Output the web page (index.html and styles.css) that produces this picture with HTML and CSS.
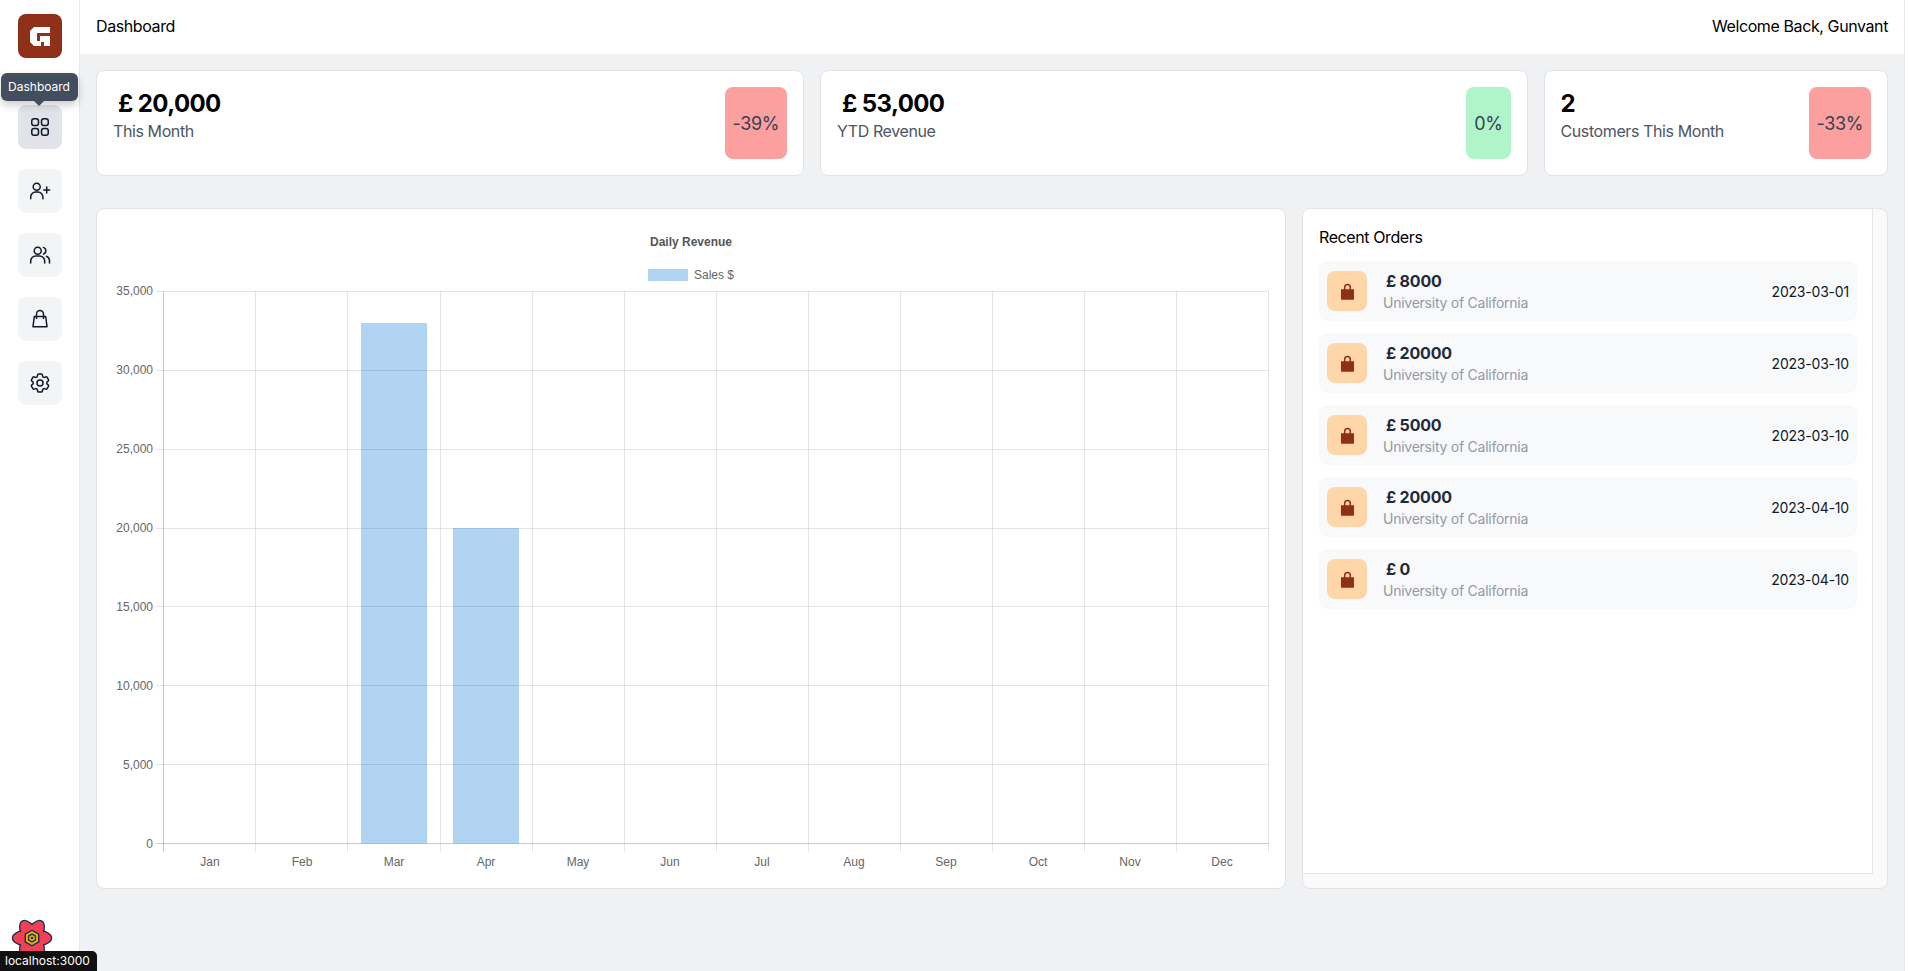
FILE: index.html
```html
<!DOCTYPE html>
<html lang="en">
<head>
    <meta charset="UTF-8">
    <title>Dashboard</title>
    <link rel="stylesheet" href="styles.css">
</head>
<body>
<div class="app">
    <aside class="sidebar">
        <div class="logo">
            <svg width="44" height="44" viewBox="0 0 44 44"><path d="M16 13H32V19H19V27H22V22H32V32H26V28H23V32H16L12 28V17Z" fill="#fff"/></svg>
        </div>
        <div class="tile active">
            <svg class="ico" viewBox="0 0 24 24"><path d="M3.75 6A2.25 2.25 0 016 3.75h2.25A2.25 2.25 0 0110.5 6v2.25a2.25 2.25 0 01-2.25 2.25H6a2.25 2.25 0 01-2.25-2.25V6zM3.75 15.75A2.25 2.25 0 016 13.5h2.25a2.25 2.25 0 012.25 2.25V18a2.25 2.25 0 01-2.25 2.25H6A2.25 2.25 0 013.75 18v-2.25zM13.5 6a2.25 2.25 0 012.25-2.25H18A2.25 2.25 0 0120.25 6v2.25A2.25 2.25 0 0118 10.5h-2.25a2.25 2.25 0 01-2.25-2.25V6zM13.5 15.75a2.25 2.25 0 012.25-2.25H18a2.25 2.25 0 012.25 2.25V18A2.25 2.25 0 0118 20.25h-2.25A2.25 2.25 0 0113.5 18v-2.25z"/></svg>
            <div class="tooltip">Dashboard</div>
        </div>
        <div class="tile">
            <svg class="ico" viewBox="0 0 24 24"><circle cx="8.7" cy="7.7" r="3.5"/><path d="M2.700 19.700v-1.700a5 5 0 0 1 5-5h2.200a5 5 0 0 1 5 5v1.700M18.700 8v6M15.700 11h6"/></svg>
        </div>
        <div class="tile">
            <svg class="ico" viewBox="0 0 24 24"><circle cx="9.7" cy="7.7" r="3.5"/><path d="M2.700 20v-2a5 5 0 0 1 5-5h4a5 5 0 0 1 5 5v2M15.500 4.400a3.500 3.500 0 0 1 0 6.600M18.500 13.300a5 5 0 0 1 3 4.700v2"/></svg>
        </div>
        <div class="tile">
            <svg class="ico" viewBox="0 0 24 24"><path d="M8.500 11.500V7a3.500 3.500 0 0 1 7 0v4.500M6.300 9.500h11.400l1.300 10.200H5z"/></svg>
        </div>
        <div class="tile">
            <svg class="ico" viewBox="0 0 24 24"><path d="M9.594 3.94c.09-.542.56-.94 1.11-.94h2.593c.55 0 1.02.398 1.11.94l.213 1.281c.063.374.313.686.645.87.074.04.147.083.22.127.324.196.72.257 1.075.124l1.217-.456a1.125 1.125 0 011.37.49l1.296 2.247a1.125 1.125 0 01-.26 1.431l-1.003.827c-.293.24-.438.613-.431.992a6.759 6.759 0 010 .255c-.007.378.138.75.43.99l1.005.828c.424.35.534.954.26 1.43l-1.298 2.247a1.125 1.125 0 01-1.369.491l-1.217-.456c-.355-.133-.75-.072-1.076.124a6.57 6.57 0 01-.22.128c-.331.183-.581.495-.644.869l-.213 1.28c-.09.543-.56.941-1.11.941h-2.594c-.55 0-1.02-.398-1.11-.94l-.213-1.281c-.062-.374-.312-.686-.644-.87a6.52 6.52 0 01-.22-.127c-.325-.196-.72-.257-1.076-.124l-1.217.456a1.125 1.125 0 01-1.369-.49l-1.297-2.247a1.125 1.125 0 01.26-1.431l1.004-.827c.292-.24.437-.613.43-.992a6.932 6.932 0 010-.255c.007-.378-.138-.75-.43-.99l-1.004-.828a1.125 1.125 0 01-.26-1.43l1.297-2.247a1.125 1.125 0 011.37-.491l1.216.456c.356.133.751.072 1.076-.124.072-.044.146-.087.22-.128.332-.183.582-.495.644-.869l.214-1.281z"/><path d="M15 12a3 3 0 11-6 0 3 3 0 016 0z"/></svg>
        </div>
    </aside>

    <div class="main">
        <header class="topbar">
            <span>Dashboard</span>
            <span>Welcome Back, Gunvant</span>
        </header>

        <div class="content">
            <div class="stats">
                <div class="card stat">
                    <div>
                        <div class="stat-value"><span class="pound">£</span> 20,000</div>
                        <div class="stat-label">This Month</div>
                    </div>
                    <div class="badge red">-39%</div>
                </div>
                <div class="card stat">
                    <div>
                        <div class="stat-value"><span class="pound">£</span> 53,000</div>
                        <div class="stat-label">YTD Revenue</div>
                    </div>
                    <div class="badge green">0%</div>
                </div>
                <div class="card stat">
                    <div>
                        <div class="stat-value">2</div>
                        <div class="stat-label">Customers This Month</div>
                    </div>
                    <div class="badge red">-33%</div>
                </div>
            </div>

            <div class="lower">
                <div class="card chart-card">
                    <svg class="chart" viewBox="97 209 1188 679">
                        <text class="chart-title" x="691" y="246" text-anchor="middle">Daily Revenue</text>
                        <rect class="bar" x="648" y="269" width="40" height="12"/>
                        <text class="tick" x="694" y="279">Sales $</text>

                        <rect class="bar" x="361" y="323" width="66" height="520.5"/>
                        <rect class="bar" x="453" y="528" width="66" height="315.5"/>

                        <path class="grid" d="M156 291.5H1269M156 370.5H1269M156 449.5H1269M156 528.5H1269M156 606.5H1269M156 685.5H1269M156 764.5H1269"/>
                        <path class="grid" d="M255.5 291V852M347.5 291V852M440.5 291V852M532.5 291V852M624.5 291V852M716.5 291V852M808.5 291V852M900.5 291V852M992.5 291V852M1084.5 291V852M1176.5 291V852M1268.5 291V852"/>
                        <path class="axis" d="M163.5 291V852M156 843.5H1269"/>

                        <text class="tick" x="153" y="295" text-anchor="end">35,000</text>
                        <text class="tick" x="153" y="374" text-anchor="end">30,000</text>
                        <text class="tick" x="153" y="453" text-anchor="end">25,000</text>
                        <text class="tick" x="153" y="532" text-anchor="end">20,000</text>
                        <text class="tick" x="153" y="611" text-anchor="end">15,000</text>
                        <text class="tick" x="153" y="690" text-anchor="end">10,000</text>
                        <text class="tick" x="153" y="769" text-anchor="end">5,000</text>
                        <text class="tick" x="153" y="848" text-anchor="end">0</text>

                        <text class="tick" x="210" y="866" text-anchor="middle">Jan</text>
                        <text class="tick" x="302" y="866" text-anchor="middle">Feb</text>
                        <text class="tick" x="394" y="866" text-anchor="middle">Mar</text>
                        <text class="tick" x="486" y="866" text-anchor="middle">Apr</text>
                        <text class="tick" x="578" y="866" text-anchor="middle">May</text>
                        <text class="tick" x="670" y="866" text-anchor="middle">Jun</text>
                        <text class="tick" x="762" y="866" text-anchor="middle">Jul</text>
                        <text class="tick" x="854" y="866" text-anchor="middle">Aug</text>
                        <text class="tick" x="946" y="866" text-anchor="middle">Sep</text>
                        <text class="tick" x="1038" y="866" text-anchor="middle">Oct</text>
                        <text class="tick" x="1130" y="866" text-anchor="middle">Nov</text>
                        <text class="tick" x="1222" y="866" text-anchor="middle">Dec</text>
                    </svg>
                </div>

                <div class="card orders-card">
                    <div class="orders">
                        <h2 class="orders-title">Recent Orders</h2>
                        <div class="order">
                            <div class="order-icon"><svg class="bag" viewBox="0 0 16 16"><path d="M5 6V4.500a3 3 0 0 1 6 0V6h2.500v8a1 1 0 0 1-1 1h-9a1 1 0 0 1-1-1V6zM6.300 6h3.400V4.500a1.700 1.700 0 0 0-3.400 0z"/></svg></div>
                            <div class="order-info">
                                <div class="order-amount"><span class="pound-sm">£</span> 8000</div>
                                <div class="order-name">University of California</div>
                            </div>
                            <div class="order-date">2023-03-01</div>
                        </div>
                        <div class="order">
                            <div class="order-icon"><svg class="bag" viewBox="0 0 16 16"><path d="M5 6V4.500a3 3 0 0 1 6 0V6h2.500v8a1 1 0 0 1-1 1h-9a1 1 0 0 1-1-1V6zM6.300 6h3.400V4.500a1.700 1.700 0 0 0-3.400 0z"/></svg></div>
                            <div class="order-info">
                                <div class="order-amount"><span class="pound-sm">£</span> 20000</div>
                                <div class="order-name">University of California</div>
                            </div>
                            <div class="order-date">2023-03-10</div>
                        </div>
                        <div class="order">
                            <div class="order-icon"><svg class="bag" viewBox="0 0 16 16"><path d="M5 6V4.500a3 3 0 0 1 6 0V6h2.500v8a1 1 0 0 1-1 1h-9a1 1 0 0 1-1-1V6zM6.300 6h3.400V4.500a1.700 1.700 0 0 0-3.400 0z"/></svg></div>
                            <div class="order-info">
                                <div class="order-amount"><span class="pound-sm">£</span> 5000</div>
                                <div class="order-name">University of California</div>
                            </div>
                            <div class="order-date">2023-03-10</div>
                        </div>
                        <div class="order">
                            <div class="order-icon"><svg class="bag" viewBox="0 0 16 16"><path d="M5 6V4.500a3 3 0 0 1 6 0V6h2.500v8a1 1 0 0 1-1 1h-9a1 1 0 0 1-1-1V6zM6.300 6h3.400V4.500a1.700 1.700 0 0 0-3.400 0z"/></svg></div>
                            <div class="order-info">
                                <div class="order-amount"><span class="pound-sm">£</span> 20000</div>
                                <div class="order-name">University of California</div>
                            </div>
                            <div class="order-date">2023-04-10</div>
                        </div>
                        <div class="order">
                            <div class="order-icon"><svg class="bag" viewBox="0 0 16 16"><path d="M5 6V4.500a3 3 0 0 1 6 0V6h2.500v8a1 1 0 0 1-1 1h-9a1 1 0 0 1-1-1V6zM6.300 6h3.400V4.500a1.700 1.700 0 0 0-3.400 0z"/></svg></div>
                            <div class="order-info">
                                <div class="order-amount"><span class="pound-sm">£</span> 0</div>
                                <div class="order-name">University of California</div>
                            </div>
                            <div class="order-date">2023-04-10</div>
                        </div>
                    </div>
                </div>
            </div>
        </div>
    </div>
</div>

<svg class="devtools" width="46" height="46" viewBox="-23 -23 46 46">
    <g fill="#f43f55" stroke="#16304f" stroke-width="1.500">
        <ellipse rx="19.500" ry="8.500"/>
        <ellipse rx="19.500" ry="8.500" transform="rotate(60)"/>
        <ellipse rx="19.500" ry="8.500" transform="rotate(120)"/>
    </g>
    <g fill="#f43f55">
        <ellipse rx="18.700" ry="7.700"/>
        <ellipse rx="18.700" ry="7.700" transform="rotate(60)"/>
        <ellipse rx="18.700" ry="7.700" transform="rotate(120)"/>
    </g>
    <path d="M0-8.500 7.400-4.200V4.200L0 8.500-7.400 4.200V-4.200z" fill="#16304f"/>
    <path d="M0-7 6-3.500V3.500L0 7-6 3.500V-3.500z" fill="#eab308"/>
    <path d="M0-4.800 4.100-2.400V2.400L0 4.800-4.100 2.400V-2.400z" fill="#16304f"/>
    <path d="M0-3.300 2.800-1.600V1.600L0 3.300-2.800 1.600V-1.600z" fill="#eab308"/>
    <circle r="1.300" fill="#16304f"/>
</svg>
<div class="host-tag">localhost:3000</div>
</body>
</html>
```

FILE: styles.css
```css
* {
    box-sizing: border-box;
}
body {
    margin: 0;
    height: 971px;
    overflow: hidden;
    background-color: #fff;
    font-family: Inter, "Liberation Sans", sans-serif;
    font-size: 16px;
    color: #000;
}
.app {
    display: flex;
    height: 100%;
    width: 1905px;
}
.sidebar {
    width: 80px;
    flex-shrink: 0;
    background-color: #fff;
    border-right: 1px solid #e5e7eb;
    display: flex;
    flex-direction: column;
    align-items: center;
    padding-top: 14px;
    gap: 20px;
}
.logo {
    width: 44px;
    height: 44px;
    border-radius: 8px;
    background-color: #8f3118;
    margin-bottom: 27px;
}
.logo svg {
    display: block;
}
.tile {
    position: relative;
    width: 44px;
    height: 44px;
    border-radius: 8px;
    background-color: #f3f4f6;
    display: flex;
    align-items: center;
    justify-content: center;
}
.tile.active {
    background-color: #e1e3e9;
}
.ico {
    width: 24px;
    height: 24px;
    fill: none;
    stroke: #111827;
    stroke-width: 1.5;
    stroke-linecap: round;
    stroke-linejoin: round;
}
.tooltip {
    position: absolute;
    left: -17px;
    top: -32px;
    width: 77px;
    height: 28px;
    padding-bottom: 2px;
    border-radius: 6px;
    background-color: #424e5e;
    color: #fff;
    font-size: 12px;
    display: flex;
    align-items: center;
    justify-content: center;
    box-shadow: 0 4px 8px rgba(0, 0, 0, 0.2);
}
.tooltip::after {
    content: "";
    position: absolute;
    left: 33px;
    bottom: -5px;
    border-left: 5px solid transparent;
    border-right: 5px solid transparent;
    border-top: 5px solid #424e5e;
}
.main {
    flex: 1;
    display: flex;
    flex-direction: column;
    background-color: #f0f1f3;
    border-right: 1px solid #e5e7eb;
}
.topbar {
    height: 54px;
    padding: 0 16px 2px;
    background-color: #fff;
    letter-spacing: -0.4px;
    display: flex;
    align-items: center;
    justify-content: space-between;
}
.content {
    padding: 16px 16px 0;
}
.card {
    background-color: #fff;
    border: 1px solid #e1e3e8;
    border-radius: 8px;
}
.stats {
    display: grid;
    grid-template-columns: 708px 707.5px 344.5px;
    gap: 16px;
}
.stat {
    height: 106px;
    padding: 16px;
    display: flex;
    justify-content: space-between;
}
.stat-value {
    padding-top: 1px;
    font-size: 24px;
    line-height: 31px;
    font-weight: 700;
    letter-spacing: -0.6px;
}
.pound {
    margin-left: 5px;
}
.stat-label {
    line-height: 24px;
    color: #4b5563;
    letter-spacing: -0.4px;
}
.badge {
    height: 72px;
    padding: 0 8px;
    border-radius: 8px;
    font-size: 18px;
    letter-spacing: -0.4px;
    color: #374151;
    display: flex;
    align-items: center;
}
.red {
    background-color: #fc9f9f;
}
.green {
    background-color: #b0f5c9;
}
.lower {
    display: flex;
    gap: 16px;
    margin-top: 32px;
    height: 681px;
}
.chart-card {
    width: 1190px;
}
.chart {
    display: block;
    width: 1188px;
    height: 679px;
}
.chart text {
    font-family: "Liberation Sans", Arial, sans-serif;
}
.chart-title {
    font-size: 12px;
    font-weight: 700;
    fill: #555;
}
.tick {
    font-size: 12px;
    fill: #666;
}
.bar {
    fill: rgba(66, 153, 225, 0.42);
}
.grid {
    fill: none;
    stroke: rgba(0, 0, 0, 0.1);
}
.axis {
    fill: none;
    stroke: rgba(0, 0, 0, 0.2);
}
.orders-card {
    flex: 1;
    background-color: #fafafa;
    padding-right: 14px;
    padding-bottom: 14px;
    overflow: hidden;
}
.orders {
    height: 100%;
    background-color: #fff;
    border-right: 1px solid #e5e7eb;
    border-bottom: 1px solid #e5e7eb;
    padding: 16px 15px 16px 16px;
}
.orders-title {
    margin: 0 0 12px;
    font-size: 16px;
    line-height: 24px;
    font-weight: 400;
    letter-spacing: -0.4px;
}
.order {
    height: 60px;
    margin-bottom: 12px;
    padding: 0 8px;
    border-radius: 8px;
    background-color: #f8f9fa;
    display: flex;
    align-items: center;
}
.order-icon {
    width: 40px;
    height: 40px;
    border-radius: 8px;
    background-color: #fed6a8;
    display: flex;
    align-items: center;
    justify-content: center;
    flex-shrink: 0;
}
.bag {
    width: 19px;
    height: 19px;
    fill: #8f3118;
    fill-rule: evenodd;
}
.order-info {
    flex: 1;
    margin-left: 16px;
}
.order-amount {
    font-weight: 700;
    line-height: 24px;
    letter-spacing: -0.2px;
    color: #1f2937;
}
.pound-sm {
    margin-left: 3px;
}
.order-name {
    font-size: 14px;
    line-height: 20px;
    letter-spacing: -0.25px;
    color: #929aa8;
}
.order-date {
    font-size: 14px;
    letter-spacing: -0.2px;
    color: #111827;
}
.devtools {
    position: absolute;
    left: 9px;
    top: 915px;
}
.host-tag {
    position: absolute;
    left: 0;
    bottom: 0;
    height: 20px;
    padding: 0 7px 0 5px;
    line-height: 20px;
    background-color: #111;
    border-top-right-radius: 5px;
    color: #fff;
    font-size: 12px;
}
```
